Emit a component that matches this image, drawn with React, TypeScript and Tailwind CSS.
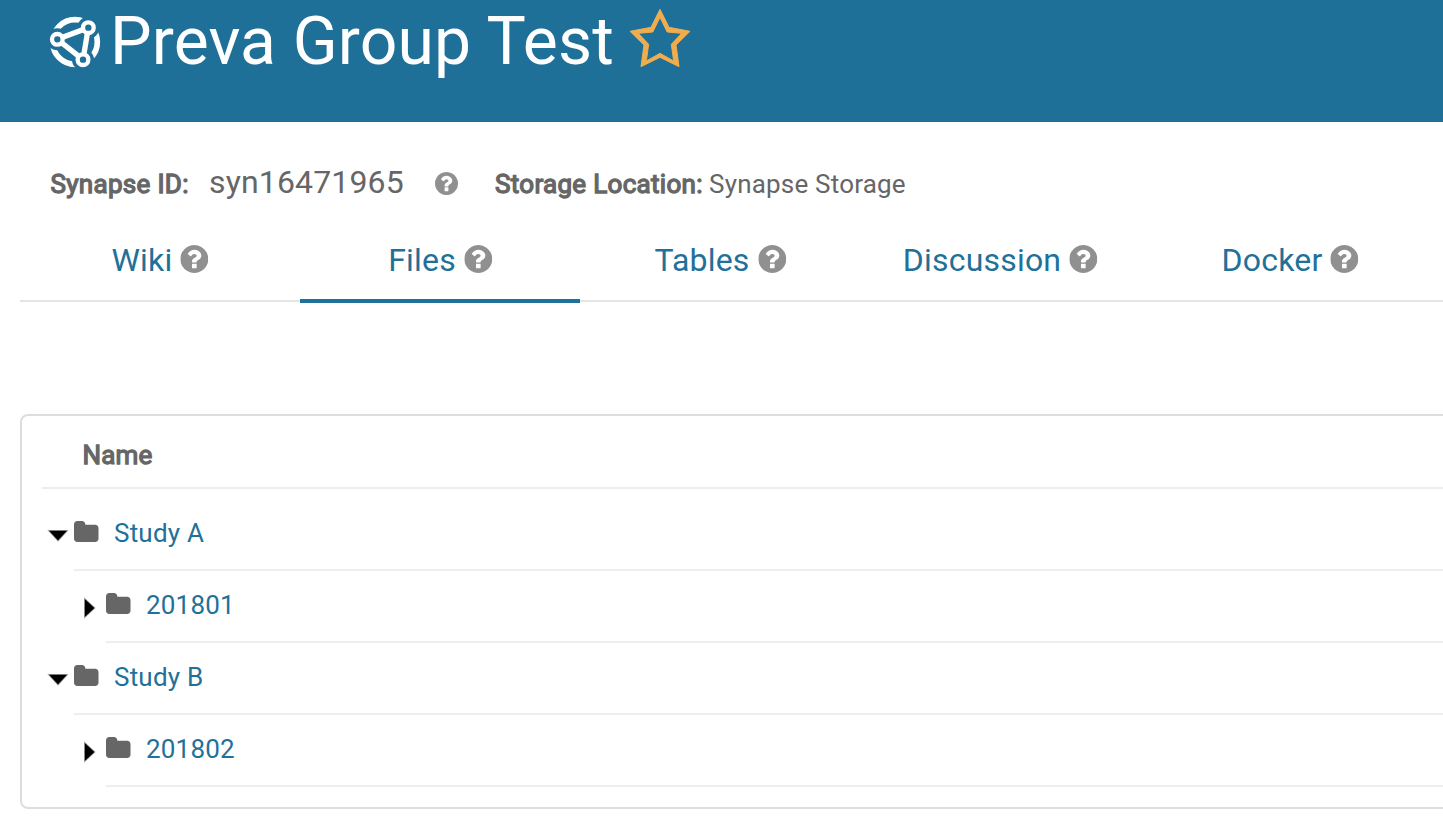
import React from 'react';

function SynapseLogo() {
  return (
    <svg viewBox="0 0 156 156" className="h-[52px] w-[52px] shrink-0" fill="none">
      <circle cx="78" cy="78" r="67" stroke="white" strokeWidth="17" />
      <g fill="#1e7098">
        <circle cx="25" cy="70" r="33" />
        <circle cx="118" cy="35" r="33" />
        <circle cx="102" cy="131" r="33" />
      </g>
      <path d="M25 70L118 35L102 131Z" stroke="white" strokeWidth="16" />
      <g fill="#1e7098" stroke="white" strokeWidth="13">
        <circle cx="25" cy="70" r="16" />
        <circle cx="118" cy="35" r="16" />
        <circle cx="102" cy="131" r="16" />
      </g>
    </svg>
  );
}

function Star() {
  return (
    <svg viewBox="0 0 186 180" className="h-[60px] w-[62px] shrink-0">
      <path
        fillRule="evenodd"
        d="M93 4L120 58L183 70L141 111L150 176L93 148L36 176L45 111L3 70L66 58ZM93 28L71.500 72L28 76L59 109L52 159L93 136L134 159L127 109L158 76L114.500 72Z"
        fill="#f0ad4e"
        stroke="#f0ad4e"
        strokeWidth="3"
        strokeLinejoin="round"
      />
    </svg>
  );
}

function HelpIcon({ className }: { className: string }) {
  return (
    <svg viewBox="128 128 1536 1536" className={className} fill="#909090">
      <path d="M1024 1376v-192q0-14-9-23t-23-9h-192q-14 0-23 9t-9 23v192q0 14 9 23t23 9h192q14 0 23-9t9-23zm256-672q0-88-55.5-163t-138.5-116-170-41q-243 0-371 213-15 24 8 42l132 100q7 6 19 6 16 0 25-12 53-68 86-92 34-24 86-24 48 0 85.5 26t37.5 59q0 38-20 61t-68 45q-63 28-115.5 86.5t-52.5 125.5v36q0 14 9 23t23 9h192q14 0 23-9t9-23q0-19 21.5-49.5t54.5-49.5q32-18 49-28.5t46-35 44.5-48 28-60.5 12.5-81zm384 192q0 209-103 385.5t-279.5 279.5-385.5 103-385.5-103-279.5-279.5-103-385.5 103-385.5 279.5-279.5 385.5-103 385.5 103 279.5 279.5 103 385.5z" />
    </svg>
  );
}

function Folder() {
  return (
    <svg viewBox="0 128 1664 1408" preserveAspectRatio="none" className="mb-px h-[21px] w-[24.5px] shrink-0" fill="#666666">
      <path d="M1664 608v704q0 92-66 158t-158 66h-1216q-92 0-158-66t-66-158v-960q0-92 66-158t158-66h320q92 0 158 66t66 158v32h672q92 0 158 66t66 158z" />
    </svg>
  );
}

function Caret({ open }: { open: boolean }) {
  return (
    <svg viewBox="0 0 24 24" className="mt-[5px] h-6 w-6 shrink-0" fill="black" stroke="black" strokeOpacity="0.35" strokeWidth="1.500">
      {open ? <path d="M3 6.800H21L12 16.600Z" /> : <path d="M6.800 3V21L16.500 12Z" />}
    </svg>
  );
}

function FileRow({ name, open }: { name: string; open: boolean }) {
  return (
    <div className={open ? 'flex h-[72px] pl-6' : 'flex h-[72px] pl-14'}>
      <div className="flex h-[68px] w-7 shrink-0 items-center">
        <Caret open={open} />
      </div>
      <div className="flex h-[72px] grow items-center border-b-2 border-[#eeeeee] pb-1">
        <Folder />
        <a className="ml-[15.5px] pt-[2px] text-[26px] tracking-[0.2px] text-[#1f7199]">{name}</a>
      </div>
    </div>
  );
}

const tabs = [
  { label: 'Wiki', cell: 'w-[280px]' },
  { label: 'Files', cell: 'w-[280px]', active: true },
  { label: 'Tables', cell: 'w-[280px]' },
  { label: 'Discussion', cell: 'w-[280px]' },
  { label: 'Docker', cell: 'w-[300px]' },
];

export default function App() {
  return (
    <div className="h-[823px] w-full overflow-hidden bg-white font-[Roboto,sans-serif] text-[#666666]">
      <header className="flex h-[122px] items-start bg-[#1e7098] pl-[49px]">
        <div className="pt-[16px]">
          <SynapseLogo />
        </div>
        <h1 className="ml-[9px] whitespace-nowrap text-[66px] leading-[84px] tracking-[0.16px] text-white">
          Preva Group Test
        </h1>
        <div className="ml-[15px] pt-[8px]">
          <Star />
        </div>
      </header>

      <section className="flex h-[88px] items-baseline whitespace-nowrap pt-[40px] pl-[50px] text-[26px] leading-[40px]">
        <span className="w-[159px] pl-[0.5px] tracking-[0.3px] [-webkit-text-stroke:1.3px_#666666]">Synapse ID:</span>
        <span className="w-[226px] text-[32px] tracking-[0.15px]">syn16471965</span>
        <HelpIcon className="mr-[37px] h-[23px] w-[23px] shrink-0 translate-y-[2px]" />
        <span className="w-[214px] tracking-[0.3px] [-webkit-text-stroke:1.3px_#666666]">Storage Location:</span>
        <span className="tracking-[0.2px]">Synapse Storage</span>
      </section>

      <nav className="ml-5 flex h-[92px] border-b-2 border-[#e5e5e5] pt-[9px]">
        {tabs.map((tab) => (
          <div
            key={tab.label}
            className={`${tab.cell} flex h-[84px] shrink-0 items-center justify-center gap-2 border-b-4 pt-[3px] pb-[3px] text-[32px] tracking-[0.2px] text-[#1f7199] ${
              tab.active ? 'border-[#1f7199]' : 'border-transparent'
            }`}
          >
            <span className="pt-[2px]">{tab.label}</span>
            <HelpIcon className="h-7 w-7 shrink-0 translate-x-[0.300px]" />
          </div>
        ))}
      </nav>

      <main className="mt-[112px] -mr-4 ml-5 h-[395px] rounded-[8px] border-2 border-[#dddddd] pl-5">
        <div className="flex h-[73px] items-center border-b-2 border-[#eeeeee] pt-[8px] pl-[40.5px] text-[26px] tracking-[0.2px]">
          <span className="[-webkit-text-stroke:1.3px_#666666]">Name</span>
        </div>
        <div className="-ml-5 pt-[10px]">
          <FileRow name="Study A" open />
          <FileRow name="201801" open={false} />
          <FileRow name="Study B" open />
          <FileRow name="201802" open={false} />
        </div>
      </main>
    </div>
  );
}
